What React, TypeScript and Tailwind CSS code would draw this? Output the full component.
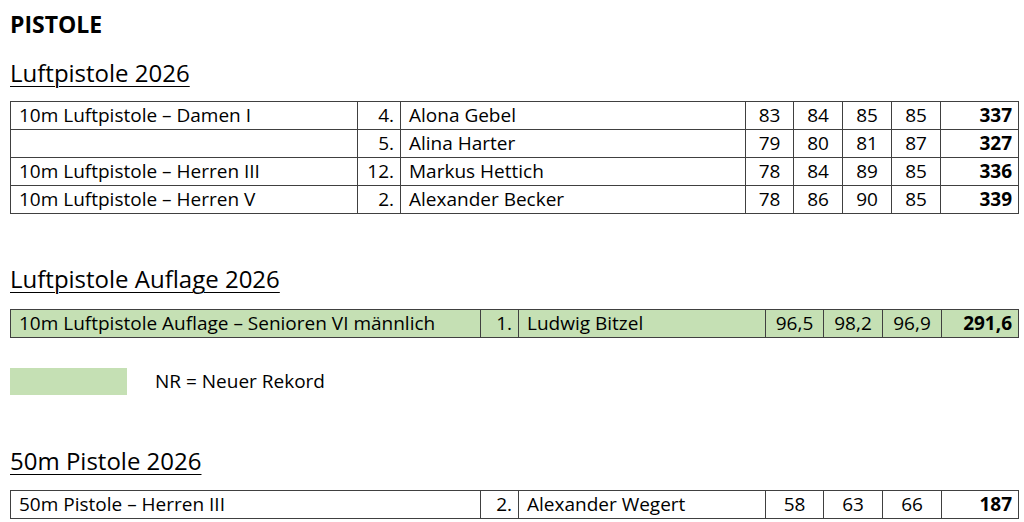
// Ergebnisliste Pistole — Tabellen wie im Word-Dokument

type Row = {
  disc: string;
  rank: string;
  name: string;
  scores: string[];
  total: string;
};

const LP_ROWS: Row[] = [
  { disc: "10m Luftpistole – Damen I", rank: "4.", name: "Alona Gebel", scores: ["83", "84", "85", "85"], total: "337" },
  { disc: "", rank: "5.", name: "Alina Harter", scores: ["79", "80", "81", "87"], total: "327" },
  { disc: "10m Luftpistole – Herren III", rank: "12.", name: "Markus Hettich", scores: ["78", "84", "89", "85"], total: "336" },
  { disc: "10m Luftpistole – Herren V", rank: "2.", name: "Alexander Becker", scores: ["78", "86", "90", "85"], total: "339" },
];

const AUFLAGE_ROWS: Row[] = [
  { disc: "10m Luftpistole Auflage – Senioren VI männlich", rank: "1.", name: "Ludwig Bitzel", scores: ["96,5", "98,2", "96,9"], total: "291,6" },
];

const P50_ROWS: Row[] = [
  { disc: "50m Pistole – Herren III", rank: "2.", name: "Alexander Wegert", scores: ["58", "63", "66"], total: "187" },
];

const FONT = "font-['Open_Sans','Lato',sans-serif]";

function ResultTable({ rows, widths, record }: { rows: Row[]; widths: number[]; record?: boolean }) {
  const cell = "border border-[#404040] h-[28px] p-0 text-[19px] leading-none text-black";
  return (
    <table className={`table-fixed border-collapse w-[1008px] ${record ? "bg-[#c5e0b4]" : ""}`}>
      <colgroup>
        {widths.map((w, i) => (
          <col key={i} style={{ width: w }} />
        ))}
      </colgroup>
      <tbody>
        {rows.map((r, i) => (
          <tr key={i}>
            <td className={`${cell} pl-[8px] text-left`}>{r.disc}</td>
            <td className={`${cell} pr-[6px] text-right`}>{r.rank}</td>
            <td className={`${cell} pl-[8px] text-left`}>{r.name}</td>
            {r.scores.map((s, j) => (
              <td key={j} className={`${cell} text-center`}>
                {s}
              </td>
            ))}
            <td className={`${cell} pr-[6px] text-right font-bold`}>{r.total}</td>
          </tr>
        ))}
      </tbody>
    </table>
  );
}

function SectionTitle({ children }: { children: string }) {
  return <h2 className="text-[24px] leading-[32px] underline underline-offset-[4px] decoration-1 text-black">{children}</h2>;
}

export default function App() {
  return (
    <div className={`w-[1024px] h-[522px] overflow-hidden bg-white pl-[10px] ${FONT}`}>
      <h1 className="text-[23px] leading-[48px] font-bold text-black">PISTOLE</h1>

      <div className="mt-[9px]">
        <SectionTitle>Luftpistole 2026</SectionTitle>
      </div>
      <div className="mt-[12px]">
        <ResultTable rows={LP_ROWS} widths={[347, 43, 345, 48, 49, 49, 49, 78]} />
      </div>

      <div className="mt-[49px]">
        <SectionTitle>Luftpistole Auflage 2026</SectionTitle>
      </div>
      <div className="mt-[14px]">
        <ResultTable rows={AUFLAGE_ROWS} widths={[470, 38, 247, 58, 59, 59, 77]} record />
      </div>

      {/* Legende */}
      <div className="mt-[30px] flex items-center h-[27px]">
        <div className="w-[117px] h-[27px] bg-[#c5e0b4]" />
        <span className="ml-[28px] text-[19px] text-black">NR = Neuer Rekord</span>
      </div>

      <div className="mt-[50px]">
        <SectionTitle>50m Pistole 2026</SectionTitle>
      </div>
      <div className="mt-[13px]">
        <ResultTable rows={P50_ROWS} widths={[470, 38, 247, 58, 59, 59, 77]} />
      </div>
    </div>
  );
}
